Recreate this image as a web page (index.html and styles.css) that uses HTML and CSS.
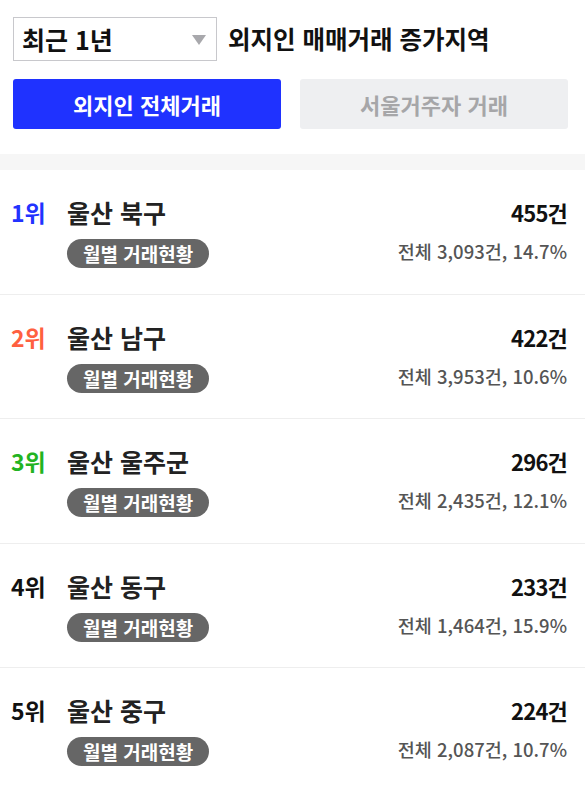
FILE: index.html
```html
<!DOCTYPE html>
<html lang="ko">
<head>
<meta charset="utf-8">
<link rel="stylesheet" href="styles.css">
</head>
<body>
<div class="top">
  <div class="filter-row">
    <div class="select">
      <span class="select-text">최근 1년</span>
      <span class="caret"></span>
    </div>
    <h1 class="title">외지인 매매거래 증가지역</h1>
  </div>
  <div class="tabs">
    <button class="tab tab-active">외지인 전체거래</button>
    <button class="tab tab-off">서울거주자 거래</button>
  </div>
</div>
<div class="band"></div>
<ul class="list">
  <li class="item">
    <div class="left">
      <span class="rank r1">1위</span>
      <div class="info">
        <div class="name">울산 북구</div>
        <span class="badge">월별 거래현황</span>
      </div>
    </div>
    <div class="right">
      <div class="count">455건</div>
      <div class="total">전체 3,093건, 14.7%</div>
    </div>
  </li>
  <li class="item">
    <div class="left">
      <span class="rank r2">2위</span>
      <div class="info">
        <div class="name">울산 남구</div>
        <span class="badge">월별 거래현황</span>
      </div>
    </div>
    <div class="right">
      <div class="count">422건</div>
      <div class="total">전체 3,953건, 10.6%</div>
    </div>
  </li>
  <li class="item">
    <div class="left">
      <span class="rank r3">3위</span>
      <div class="info">
        <div class="name">울산 울주군</div>
        <span class="badge">월별 거래현황</span>
      </div>
    </div>
    <div class="right">
      <div class="count">296건</div>
      <div class="total">전체 2,435건, 12.1%</div>
    </div>
  </li>
  <li class="item">
    <div class="left">
      <span class="rank">4위</span>
      <div class="info">
        <div class="name">울산 동구</div>
        <span class="badge">월별 거래현황</span>
      </div>
    </div>
    <div class="right">
      <div class="count">233건</div>
      <div class="total">전체 1,464건, 15.9%</div>
    </div>
  </li>
  <li class="item">
    <div class="left">
      <span class="rank">5위</span>
      <div class="info">
        <div class="name">울산 중구</div>
        <span class="badge">월별 거래현황</span>
      </div>
    </div>
    <div class="right">
      <div class="count">224건</div>
      <div class="total">전체 2,087건, 10.7%</div>
    </div>
  </li>
</ul>
</body>
</html>
```
FILE: styles.css
```css
* { box-sizing: border-box; }
html, body { margin: 0; padding: 0; background: #fff; }
body {
  font-family: "Noto Sans CJK KR", "Noto Sans", sans-serif;
  color: #111;
  width: 585px;
}
.top { padding: 17px 17px 0 13px; }
.filter-row { display: flex; align-items: center; gap: 11px; }
.select {
  width: 204px; height: 44px;
  border: 1px solid #c8c8cc;
  display: flex; align-items: center; justify-content: space-between;
  padding: 0 10px 0 8px;
}
.select-text { font-size: 25px; font-weight: 700; color: #111; line-height: 32px; }
.caret {
  width: 0; height: 0;
  border-left: 7px solid transparent;
  border-right: 7px solid transparent;
  border-top: 10px solid #a8a8ac;
  margin-top: 2px;
}
.title { margin: 0; font-size: 24.5px; font-weight: 700; color: #111; line-height: 32px; }
.tabs { display: flex; gap: 19px; margin-top: 18px; }
.tab {
  width: 268px; height: 50px; border: 0; border-radius: 3px;
  font-family: inherit; font-size: 22px; font-weight: 700; padding: 0;
}
.tab-active { background: #1f32ff; color: #fff; }
.tab-off { background: #eeeff1; color: #a6a6a8; }
.band { height: 16px; background: #f6f6f6; margin-top: 25px; }
.list { list-style: none; margin: 0; padding: 0; }
.item {
  display: flex; justify-content: space-between; align-items: flex-start;
  height: 124.5px; border-bottom: 1px solid #eeeeee;
  padding: 26px 18px 0 11px;
}
.item:last-child { border-bottom: 0; }
.left { display: flex; align-items: flex-start; }
.rank { width: 56px; font-size: 23px; font-weight: 700; color: #111; line-height: 32px; }
.r1 { color: #2233ff; }
.r2 { color: #ff6040; }
.r3 { color: #22b322; }
.info { display: flex; flex-direction: column; align-items: flex-start; }
.name { font-size: 25px; font-weight: 700; color: #222; line-height: 32px; }
.badge {
  margin-top: 11px;
  background: #666; color: #fff;
  font-size: 19px; font-weight: 700;
  height: 29px; line-height: 29px; padding: 0 16px;
  border-radius: 15px;
}
.right { display: flex; flex-direction: column; align-items: flex-end; }
.count { font-size: 22px; font-weight: 700; color: #111; line-height: 32px; letter-spacing: -0.8px; }
.total { margin-top: 11px; font-size: 18.5px; font-weight: 500; color: #555; line-height: 24px; }
```
